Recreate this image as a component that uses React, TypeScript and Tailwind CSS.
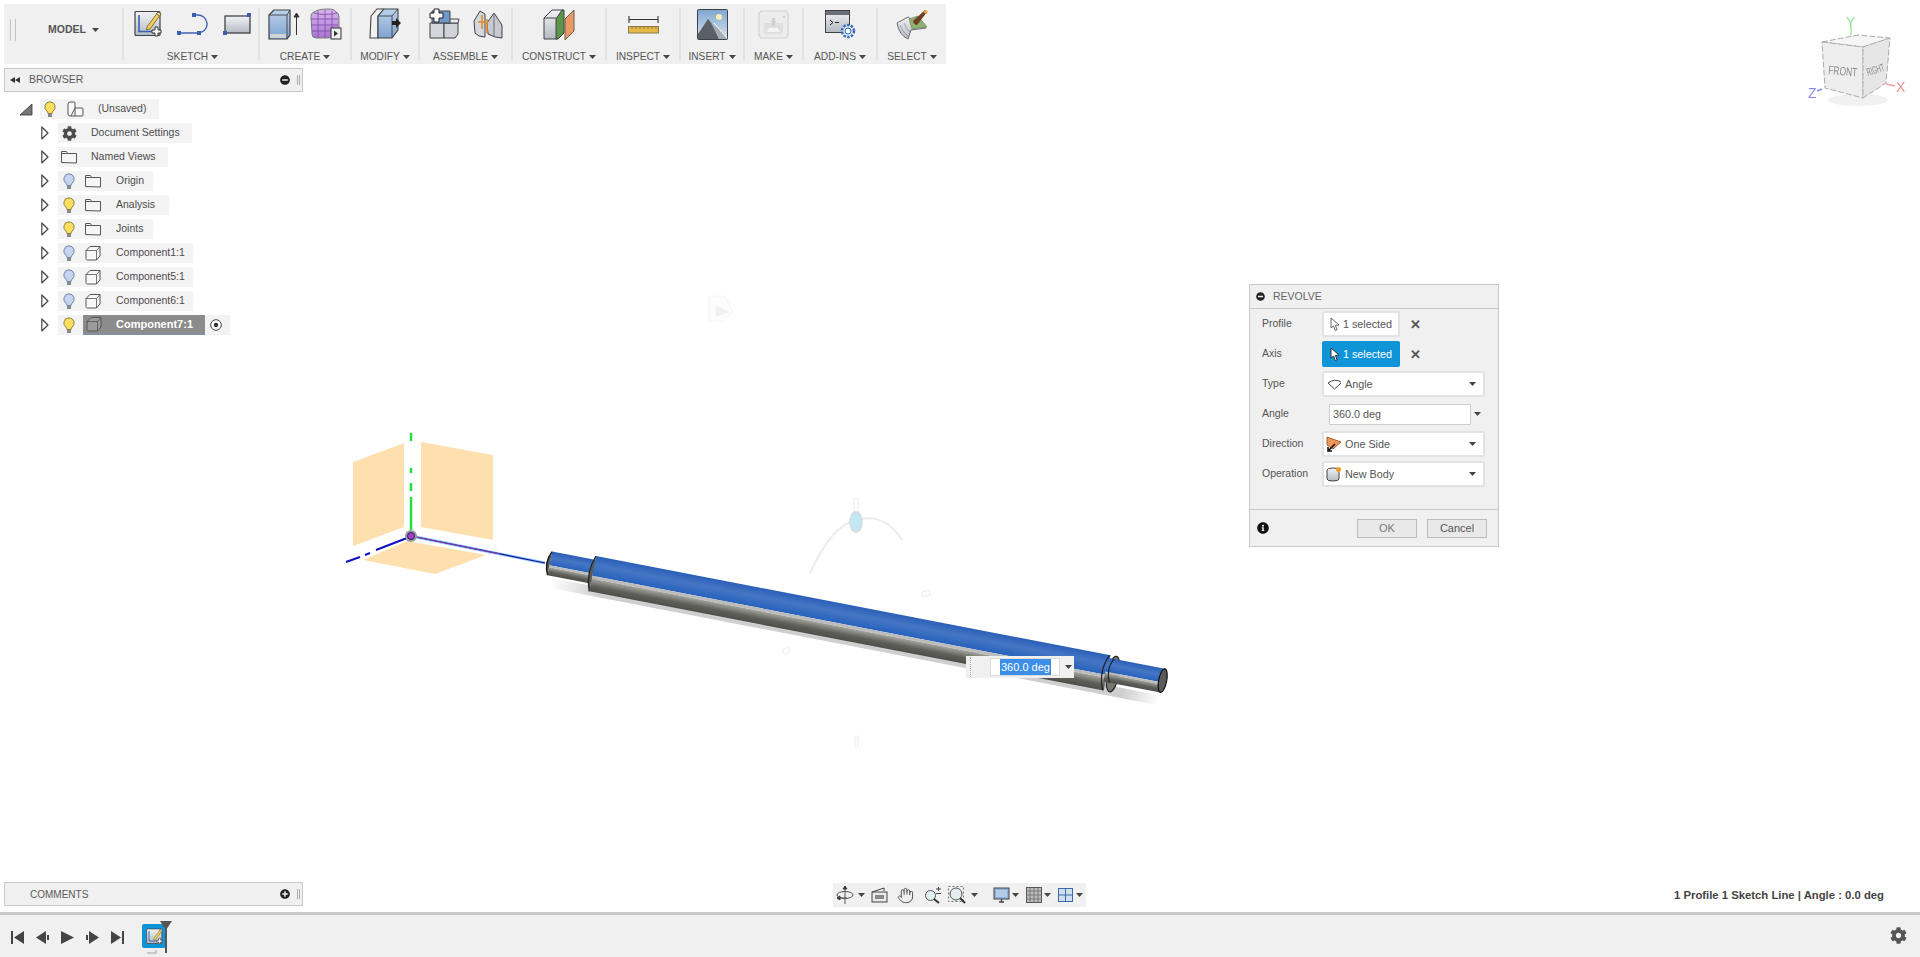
import React from 'react';
import { FaCog, FaInfoCircle, FaMinusCircle, FaPlusCircle } from 'react-icons/fa';
import { Hand } from 'lucide-react';

const Caret = ({ className = '' }: { className?: string }) => (
  <svg width="7" height="4" viewBox="0 0 7 4" className={`shrink-0 ${className}`}>
    <path d="M0 0h7L3.5 4z" fill="#444" />
  </svg>
);

const Gradients = () => (
  <svg className="absolute w-0 h-0">
    <defs>
      <linearGradient id="greyFace" x1="0" y1="0" x2="0" y2="1">
        <stop offset="0" stopColor="#f2f3f5" />
        <stop offset="1" stopColor="#b4b9c2" />
      </linearGradient>
      <linearGradient id="blueFace" x1="0" y1="0" x2="0" y2="1">
        <stop offset="0" stopColor="#bcd2ea" />
        <stop offset="1" stopColor="#7ea3cf" />
      </linearGradient>
      <linearGradient id="purpleFace" x1="0" y1="0" x2="0" y2="1">
        <stop offset="0" stopColor="#d9b5ec" />
        <stop offset="1" stopColor="#a873d2" />
      </linearGradient>
      <linearGradient id="shaftBlue" x1="0" y1="0" x2="0" y2="1">
        <stop offset="0" stopColor="#2a5fb8" />
        <stop offset="0.45" stopColor="#4576c4" />
        <stop offset="1" stopColor="#2762bd" />
      </linearGradient>
      <linearGradient id="shaftGrey" x1="0" y1="0" x2="0" y2="1">
        <stop offset="0" stopColor="#a5a59f" />
        <stop offset="0.55" stopColor="#5f5f5a" />
        <stop offset="1" stopColor="#4e4e4a" />
      </linearGradient>
      <linearGradient id="shadowFade" x1="0" y1="0" x2="1" y2="0">
        <stop offset="0" stopColor="#ffffff" />
        <stop offset="0.08" stopColor="#cfcfcf" />
        <stop offset="0.94" stopColor="#cfcfcf" />
        <stop offset="1" stopColor="#ffffff" />
      </linearGradient>
      <linearGradient id="skyFace" x1="0" y1="0" x2="0" y2="1">
        <stop offset="0" stopColor="#7fa6cf" />
        <stop offset="1" stopColor="#d9e6f0" />
      </linearGradient>
      <filter id="softBlur">
        <feGaussianBlur stdDeviation="0.5" />
      </filter>
    </defs>
  </svg>
);

const SketchIcon = ({ size = 28 }: { size?: number }) => (
  <svg width={size} height={size} viewBox="0 0 28 28">
    <rect x="1" y="1.5" width="25" height="24" rx="1" fill="url(#greyFace)" stroke="#3f4347" strokeWidth="1.2" />
    <path d="M5 5v16.5h17" fill="none" stroke="#3d62b4" strokeWidth="1.6" />
    <path d="M13 17 24 2l3 2-11 15-3.500 1z" fill="#f3cf57" stroke="#6f5a1a" strokeWidth="0.8" />
    <path d="M24 2l3 2-1.500 2-3-2z" fill="#e9e4d0" stroke="#6f5a1a" strokeWidth="0.8" />
    <path d="M19 19h3v-3h3v3h3v3h-3v3h-3v-3h-3z" fill="#fff" stroke="#333" strokeWidth="1" transform="translate(-1 1)" />
  </svg>
);

const ArcIcon = () => (
  <svg width="32" height="24" viewBox="0 0 32 24">
    <path d="M3 21h20M18 3h3a9 9 0 0 1 2 18" fill="none" stroke="#3d62b4" strokeWidth="1.4" />
    <rect x="1" y="19" width="4" height="4" fill="#3d5fb0" />
    <rect x="21" y="19" width="4" height="4" fill="#3d5fb0" />
    <rect x="16" y="1" width="4" height="4" fill="#3d5fb0" />
  </svg>
);

const RectIcon = () => (
  <svg width="30" height="24" viewBox="0 0 30 24">
    <rect x="3" y="4" width="25" height="17" fill="url(#greyFace)" stroke="#33363a" strokeWidth="1.2" />
    <rect x="25" y="1" width="4" height="4" fill="#3d5fb0" />
    <rect x="1" y="19" width="4" height="4" fill="#3d5fb0" />
  </svg>
);

const ExtrudeIcon = () => (
  <svg width="32" height="32" viewBox="0 0 32 32">
    <path d="M1 7 6 2h16v25l-3 4H1z" fill="url(#blueFace)" stroke="#3e4246" strokeWidth="1.2" strokeLinejoin="round" />
    <path d="M1 7h18v24M19 7l3-5" fill="none" stroke="#3e4246" strokeWidth="0.9" />
    <path d="M2 26h16v4H2z" fill="#cfd3d8" />
    <path d="M28.500 27V6M26 9l2.500-4L31 9z" fill="#333" stroke="#333" strokeWidth="1" />
  </svg>
);

const FormIcon = () => (
  <svg width="32" height="32" viewBox="0 0 32 32">
    <path d="M1 8q0-3 3-4 4-3 14-3 7 0 8 3 3 1 3 5v13q0 4-3 5-3 3-9 3H6q-4 0-4-4z" fill="url(#purpleFace)" stroke="#7a7a7a" strokeWidth="1" />
    <path d="M1 11h27M1 17h27M2 23h24M8 3v26M15 2v27M22 3v26M4 5q10 3 23 0" fill="none" stroke="#7c4aa6" strokeWidth="0.8" />
    <rect x="21" y="20" width="10" height="11" fill="#eee" stroke="#333" />
    <path d="M24 22.500v6l4-3z" fill="#333" />
  </svg>
);

const ModifyIcon = () => (
  <svg width="32" height="32" viewBox="0 0 32 32">
    <path d="M1 30 2 8l6-7h7L9 8v22z" fill="#f1f1f1" stroke="#3e4246" strokeWidth="1.1" strokeLinejoin="round" />
    <path d="M9 30V8l6-7h14v21l-6 8z" fill="url(#blueFace)" stroke="#3e4246" strokeWidth="1.1" strokeLinejoin="round" />
    <path d="M23 30V8l6-7" fill="none" stroke="#3e4246" strokeWidth="0.9" />
    <path d="M9 8h14" stroke="#3e4246" strokeWidth="0.9" />
    <path d="M23 13h4v-3l5 5-5 5v-3h-4z" fill="#222" />
  </svg>
);

const AssembleIcon = () => (
  <svg width="32" height="32" viewBox="0 0 32 32">
    <path d="M1 15h14v15H1z" fill="#d3d6da" stroke="#3e4246" />
    <path d="M15 30V15h14v11l-3 4z" fill="#cfd3d8" stroke="#3e4246" />
    <path d="M15 15l4-4h11l-1 4z" fill="#e9ebee" stroke="#3e4246" />
    <path d="M3 3h18v12H3z" fill="#6f97cc" stroke="#3e4246" />
    <path d="M4 4h4V0h5v4h4v5h-4v4H8V9H4z" fill="#fff" stroke="#222" transform="translate(-3 1)" />
  </svg>
);

const JointIcon = () => (
  <svg width="30" height="32" viewBox="0 0 30 32">
    <path d="M1 13 7 3l5 3v23l-6-1-4-3z" fill="#d4d7dc" stroke="#3e4246" />
    <path d="M14 15 21 5l8 12v13l-7-1-7-3z" fill="#c6cad0" stroke="#3e4246" />
    <path d="M9 7v14M5 14h8" stroke="#e08a2c" strokeWidth="1.6" />
    <path d="M14 11v14" stroke="#e08a2c" strokeWidth="1.6" />
    <path d="M21 5v24" stroke="#6d7176" strokeWidth="1" />
  </svg>
);

const ConstructIcon = () => (
  <svg width="32" height="32" viewBox="0 0 32 32">
    <path d="M1 10 9 2h11v24l-6 5H1z" fill="url(#greyFace)" stroke="#3e4246" strokeLinejoin="round" />
    <path d="M13 11 19 2h2v23l-6 6h-2z" fill="#5d9648" stroke="#3e4246" strokeLinejoin="round" />
    <path d="M1 10h12" stroke="#3e4246" />
    <path d="M22 11 31 2v21l-9 9z" fill="#ec9a63" stroke="#6a5a50" strokeLinejoin="round" />
  </svg>
);

const RulerIcon = () => (
  <svg width="31" height="20" viewBox="0 0 31 20">
    <path d="M1 2v7M30 2v7M1 5.500h29" stroke="#333" strokeWidth="1.1" fill="none" />
    <rect x="0.500" y="12.500" width="30" height="6.500" fill="#e6b94c" stroke="#8b7a45" />
    <path d="M4 13v2M8 13v2M12 13v2M16 13v2M20 13v2M24 13v2M28 13v2" stroke="#7e6520" strokeWidth="0.8" />
  </svg>
);

const InsertIcon = () => (
  <svg width="31" height="31" viewBox="0 0 31 31">
    <rect x="0.500" y="0.500" width="30" height="30" rx="1" fill="url(#skyFace)" stroke="#3e4246" />
    <circle cx="22" cy="8" r="3" fill="#f4eeb0" />
    <path d="M1 25 11 10l6 7 5 13H1z" fill="#5b6068" />
    <path d="M14 14 22 19l8 10v1h-8z" fill="#a3adb7" />
    <path d="M17 14l13 15" stroke="#fff" strokeWidth="1" />
  </svg>
);

const MakeIcon = () => (
  <svg width="31" height="29" viewBox="0 0 31 29">
    <path d="M3 1h25l2 3v21l-2 3H3l-2-3V4z" fill="#ececec" stroke="#d2d2d2" strokeWidth="1.2" />
    <path d="M6 13h7v-2h5v2h7v11H6z" fill="#dfdfdf" />
    <path d="M11 18h9l2 4H9z" fill="#f4f4f4" />
    <rect x="14" y="8" width="3" height="8" fill="#cfcfcf" />
    <rect x="25" y="6" width="2" height="2" fill="#cfcfcf" />
  </svg>
);

const AddInsIcon = () => (
  <svg width="31" height="29" viewBox="0 0 31 29">
    <rect x="0.500" y="0.500" width="24" height="22" fill="url(#greyFace)" stroke="#3e4246" />
    <rect x="1" y="1" width="23" height="4" fill="#6b7078" />
    <path d="M5 10l3 2.500L5 15M10 12.500h4" fill="none" stroke="#222" />
    <circle cx="23" cy="21" r="6" fill="#dbe9f7" stroke="#3468b8" strokeWidth="2.4" strokeDasharray="2.400 1.400" />
    <circle cx="23" cy="21" r="3" fill="#fff" stroke="#3468b8" />
  </svg>
);

const SelectIcon = () => (
  <svg width="33" height="31" viewBox="0 0 33 31">
    <path d="M1 14 12 8l18 11-15 2-3 9q-9-4-11-16z" fill="url(#greyFace)" stroke="#6a6e72" strokeLinejoin="round" />
    <path d="M4 16q2 7 8 11M8 14q2 6 6 9" fill="none" stroke="#8c9096" strokeWidth="0.8" />
    <path d="M13 10l9-3 9 11-15 2z" fill="#8eb072" stroke="#5f7f4f" strokeWidth="0.6" />
    <path d="M17 12 29 1l2 2-10 13q-3 0-4-4z" fill="#6e3f22" />
    <path d="M27 3l3-2 2 2-2 2z" fill="#e8a040" />
  </svg>
);

const ToolGroup = ({
  className,
  rowClass = 'gap-[14px]',
  label,
  children,
}: {
  className: string;
  rowClass?: string;
  label: string;
  children: React.ReactNode;
}) => (
  <div className={`h-[52px] flex flex-col items-center border-l-2 border-[#e2e2e2] shrink-0 ${className}`}>
    <div className={`h-8 shrink-0 flex items-center justify-center ${rowClass}`}>{children}</div>
    <div className="mt-[11px] h-3 shrink-0 flex items-center gap-[3px] text-[10.2px] leading-3 text-[#555]">
      {label}
      <Caret />
    </div>
  </div>
);

const Toolbar = () => (
  <div className="w-[942px] h-[60px] ml-1 mt-1 pt-1 flex bg-[#f0f0f0]">
    <div className="w-[118px] h-[52px] flex items-center shrink-0">
      <div className="ml-[6px] w-[6px] h-[22px] border-x border-[#c4c4c4] mb-[8px]" />
      <div className="ml-[32px] mb-[8px] flex items-center gap-[6px] text-[10.5px] font-bold text-[#555]">
        MODEL
        <Caret />
      </div>
    </div>
    <ToolGroup className="w-[136px] pl-[3px]" label="SKETCH">
      <SketchIcon />
      <ArcIcon />
      <RectIcon />
    </ToolGroup>
    <ToolGroup className="w-[92px]" rowClass="gap-[10px]" label="CREATE">
      <ExtrudeIcon />
      <FormIcon />
    </ToolGroup>
    <ToolGroup className="w-[68px]" label="MODIFY">
      <ModifyIcon />
    </ToolGroup>
    <ToolGroup className="w-[93px]" rowClass="gap-[12px]" label="ASSEMBLE">
      <AssembleIcon />
      <JointIcon />
    </ToolGroup>
    <ToolGroup className="w-[94px]" label="CONSTRUCT">
      <ConstructIcon />
    </ToolGroup>
    <ToolGroup className="w-[74px]" label="INSPECT">
      <RulerIcon />
    </ToolGroup>
    <ToolGroup className="w-[64px]" label="INSERT">
      <InsertIcon />
    </ToolGroup>
    <ToolGroup className="w-[59px]" label="MAKE">
      <MakeIcon />
    </ToolGroup>
    <ToolGroup className="w-[74px]" label="ADD-INS">
      <AddInsIcon />
    </ToolGroup>
    <ToolGroup className="w-[70px]" label="SELECT">
      <SelectIcon />
    </ToolGroup>
  </div>
);

const Bulb = ({ on }: { on: boolean }) => (
  <svg width="12" height="17" viewBox="0 0 12 17" className="shrink-0">
    <path
      d="M6 .8a5.200 5.200 0 0 0-3 9.400c.7.6.9 1.300.9 2.300h4.200c0-1 .2-1.700.9-2.300A5.200 5.200 0 0 0 6 .8z"
      fill={on ? '#fbdf5e' : '#c5d5f2'}
      stroke={on ? '#8d8246' : '#6f83ad'}
    />
    <rect x="4" y="13" width="4" height="3" fill="#8a8a8a" />
  </svg>
);

const FolderIcon = () => (
  <svg width="16" height="14" viewBox="0 0 16 14" className="shrink-0">
    <path d="M.500 12.500v-11h5l1 2h9v9.500z" fill="#f6f6f6" stroke="#555" />
    <path d="M.500 3.500h6" stroke="#555" />
  </svg>
);

const BoxIcon = ({ white = false }: { white?: boolean }) => (
  <svg width="16" height="16" viewBox="0 0 16 16" className="shrink-0">
    <path d="M1 5.500 5 1.500h10v9.500l-3.500 4H2.500Q1 15 1 13.500z" fill={white ? '#9a9a9a' : '#f8f8f8'} stroke="#555" strokeLinejoin="round" />
    <path d="M1 5.500h10.500V15M11.500 5.500 15 1.500" fill="none" stroke="#555" strokeWidth="0.8" />
  </svg>
);

const RootIcon = () => (
  <svg width="17" height="16" viewBox="0 0 17 16" className="shrink-0">
    <path d="M1 3q0-2 2-2h4q1 0 1 1v5h7q1 0 1 1v6q0 1-1 1H3q-2 0-2-2zM8 7v8M8 7 4 15" fill="#f8f8f8" stroke="#555" />
  </svg>
);

const ExpandArrow = () => (
  <svg width="8" height="14" viewBox="0 0 8 14" className="shrink-0">
    <path d="M.800 1v12L7 7z" fill="#fff" stroke="#444" strokeWidth="1.200" strokeLinejoin="round" />
  </svg>
);

const TreeRow = ({
  bulb,
  icon,
  label,
  width,
}: {
  bulb?: 'on' | 'off';
  icon: React.ReactNode;
  label: string;
  width: string;
}) => (
  <div className="h-6 flex items-center pl-[37px]">
    <ExpandArrow />
    <div className={`ml-[9px] h-5 flex items-center bg-[#f3f3f3] ${width}`}>
      {bulb ? (
        <>
          <span className="ml-[5px]">
            <Bulb on={bulb === 'on'} />
          </span>
          <span className="ml-[10px] w-[16px] flex justify-center">{icon}</span>
          <span className="ml-[15px] text-[10.5px] text-[#4c4c4c] whitespace-nowrap">{label}</span>
        </>
      ) : (
        <>
          <span className="ml-[3px] w-[16px] flex justify-center">{icon}</span>
          <span className="ml-[14px] text-[10.5px] text-[#4c4c4c] whitespace-nowrap">{label}</span>
        </>
      )}
    </div>
  </div>
);

const Browser = () => (
  <div className="ml-1 mt-1 w-[299px]">
    <div className="h-6 flex items-center bg-[#f0f0f0] border border-[#c8c8c8] text-[10.5px] text-[#5a5a5a]">
      <svg width="10" height="6" viewBox="0 0 10 6" className="ml-[5px]">
        <path d="M5 0v6L0 3zM10 0v6L5 3z" fill="#333" />
      </svg>
      <span className="ml-[9px]">BROWSER</span>
      <FaMinusCircle className="ml-auto mr-[7px] text-[#222] text-[10px]" />
      <div className="mr-[2px] w-[3px] h-[10px] border-x border-[#aaa]" />
    </div>
    <div className="pt-[5px]">
      <div className="h-6 flex items-center pl-[16px]">
        <svg width="13" height="13" viewBox="0 0 13 13" className="shrink-0">
          <path d="M0 12 12 1v11z" fill="#777" stroke="#333" strokeWidth="0.8" />
        </svg>
        <div className="ml-[7px] w-[119px] h-5 flex items-center bg-[#f3f3f3]">
          <span className="ml-1">
            <Bulb on />
          </span>
          <span className="ml-[11px]">
            <RootIcon />
          </span>
          <span className="ml-[14px] text-[10.5px] text-[#4c4c4c]">(Unsaved)</span>
        </div>
      </div>
      <TreeRow width="w-[134px]" label="Document Settings" icon={<FaCog className="text-[#4d4d4d] text-[15px]" />} />
      <TreeRow width="w-[110px]" label="Named Views" icon={<FolderIcon />} />
      <TreeRow width="w-[95px]" bulb="off" label="Origin" icon={<FolderIcon />} />
      <TreeRow width="w-[111px]" bulb="on" label="Analysis" icon={<FolderIcon />} />
      <TreeRow width="w-[95px]" bulb="on" label="Joints" icon={<FolderIcon />} />
      <TreeRow width="w-[135px]" bulb="off" label="Component1:1" icon={<BoxIcon />} />
      <TreeRow width="w-[135px]" bulb="off" label="Component5:1" icon={<BoxIcon />} />
      <TreeRow width="w-[135px]" bulb="off" label="Component6:1" icon={<BoxIcon />} />
      <div className="h-6 flex items-center pl-[37px]">
        <ExpandArrow />
        <div className="ml-[9px] w-[172px] h-5 flex items-center bg-[#f3f3f3]">
          <span className="ml-[5px]">
            <Bulb on />
          </span>
          <div className="ml-[8px] w-[122px] h-5 flex items-center bg-[#8c8c8c] border-b-2 border-dotted border-[#7f93b5]">
            <span className="ml-[3px]">
              <BoxIcon white />
            </span>
            <span className="ml-[14px] text-[11px] font-bold text-white whitespace-nowrap">Component7:1</span>
          </div>
          <svg width="12" height="12" viewBox="0 0 12 12" className="ml-[5px] shrink-0">
            <circle cx="6" cy="6" r="5.300" fill="#fff" stroke="#444" />
            <circle cx="6" cy="6" r="2.200" fill="#333" />
          </svg>
        </div>
      </div>
    </div>
  </div>
);

const Comments = () => (
  <div className="ml-1 mb-[6px] w-[299px] h-6 flex items-center bg-[#f0f0f0] border border-[#c8c8c8] text-[10px] text-[#5a5a5a]">
    <span className="ml-[25px]">COMMENTS</span>
    <FaPlusCircle className="ml-auto mr-[7px] text-[#222] text-[10px]" />
    <div className="mr-[2px] w-[3px] h-[10px] border-x border-[#aaa]" />
  </div>
);

const DialogRow = ({ label, children }: { label: string; children: React.ReactNode }) => (
  <div className="h-[30px] flex items-center">
    <span className="w-[72px] pl-3 text-[10.5px] text-[#555] shrink-0">{label}</span>
    {children}
  </div>
);

const CursorArrow = ({ fill, stroke }: { fill: string; stroke: string }) => (
  <svg width="10" height="15" viewBox="0 0 10 15" className="shrink-0">
    <path d="M1 1v10l2.500-2 1.800 4.500 1.800-.8L5.300 8.400 9 8z" fill={fill} stroke={stroke} strokeLinejoin="round" />
  </svg>
);

const Select = ({ icon, label }: { icon: React.ReactNode; label: string }) => (
  <div className="w-[163px] h-[26px] flex items-center bg-white border-2 border-[#e2e2e2] rounded-[2px]">
    <span className="w-[20px] flex justify-center">{icon}</span>
    <span className="ml-[1px] text-[10.8px] text-[#555]">{label}</span>
    <Caret className="ml-auto mr-[7px]" />
  </div>
);

const RevolveDialog = () => (
  <div className="absolute left-[1249px] top-[284px] w-[250px] h-[263px] flex flex-col bg-[#f0f0f0] border border-[#c9c9c9]">
    <div className="h-6 shrink-0 flex items-center border-b border-[#c9c9c9] text-[10.5px] text-[#666]">
      <FaMinusCircle className="ml-[6px] text-[#222] text-[9px]" />
      <span className="ml-[8px]">REVOLVE</span>
    </div>
    <div className="h-[200px] shrink-0">
      <DialogRow label="Profile">
        <div className="w-[78px] h-[26px] flex items-center justify-center gap-[3px] bg-white border-2 border-[#e2e2e2] rounded-[2px] text-[10.8px] text-[#555]">
          <CursorArrow fill="#fff" stroke="#666" />1 selected
        </div>
        <span className="ml-[10px] text-[13px] font-bold text-[#555] leading-none">✕</span>
      </DialogRow>
      <DialogRow label="Axis">
        <div className="w-[78px] h-[26px] flex items-center justify-center gap-[3px] bg-[#0f94d8] rounded-[2px] text-[10.8px] text-white">
          <CursorArrow fill="#fff" stroke="#333" />1 selected
        </div>
        <span className="ml-[10px] text-[13px] font-bold text-[#555] leading-none">✕</span>
      </DialogRow>
      <DialogRow label="Type">
        <Select
          label="Angle"
          icon={
            <svg width="15" height="11" viewBox="0 0 15 11">
              <path d="M1 4 7.500 10 14 4M1 4q6.500-5 13-1" fill="#fff" stroke="#444" />
            </svg>
          }
        />
      </DialogRow>
      <DialogRow label="Angle">
        <div className="ml-[7px] w-[142px] h-[21px] flex items-center pl-[3px] bg-white border border-[#cfcfcf] text-[10.8px] text-[#555]">
          360.0 deg
        </div>
        <Caret className="ml-[3px]" />
      </DialogRow>
      <DialogRow label="Direction">
        <Select
          label="One Side"
          icon={
            <svg width="16" height="16" viewBox="0 0 16 16">
              <path d="M1 1 15 6 7 13 1 9z" fill="#f0965a" stroke="#8a4a20" strokeWidth="0.8" />
              <path d="M9 8 2 15M2 11v4h4" fill="none" stroke="#111" strokeWidth="1.600" />
            </svg>
          }
        />
      </DialogRow>
      <DialogRow label="Operation">
        <Select
          label="New Body"
          icon={
            <svg width="16" height="16" viewBox="0 0 16 16">
              <path d="M1 4q0-2 6-2t6 2v9q0 2-6 2t-6-2z" fill="url(#greyFace)" stroke="#444" />
              <circle cx="12.500" cy="3.500" r="2.500" fill="#f0a020" />
            </svg>
          }
        />
      </DialogRow>
    </div>
    <div className="flex-1 flex items-center border-t border-[#c9c9c9]">
      <FaInfoCircle className="ml-[7px] text-[#111] text-[12px]" />
      <div className="ml-auto mr-[11px] flex gap-[10px]">
        <div className="w-[60px] h-[19px] flex items-center justify-center bg-[#e9e9e9] border border-[#bcbcbc] text-[11px] text-[#777]">
          OK
        </div>
        <div className="w-[60px] h-[19px] flex items-center justify-center bg-[#e9e9e9] border border-[#bcbcbc] text-[11px] text-[#555]">
          Cancel
        </div>
      </div>
    </div>
  </div>
);

const FloatingInput = () => (
  <div className="absolute left-[966px] top-[656px] w-[108px] h-[22px] flex items-center bg-[#f0f0f0]">
    <div className="ml-[4px] w-[1px] h-[20px] border-l border-dotted border-[#aaa]" />
    <div className="ml-[19px] w-[70px] h-[18px] flex items-center pl-[9px] bg-white border border-[#dcdcdc]">
      <span className="px-[1px] bg-[#3d8ee8] text-[11px] leading-[16px] text-white whitespace-nowrap">360.0 deg</span>
    </div>
    <Caret className="ml-[5px]" />
  </div>
);

const Scene = () => (
  <svg className="absolute left-0 top-0" width="1920" height="912" viewBox="0 0 1920 912">
    {/* faint manipulator marks */}
    <path d="M709 296h16l8 16-8 9h-16z" fill="#fcfcfc" stroke="#f6f6f6" />
    <path d="M716 306l14 6-14 5z" fill="#f0f0f0" />
    <path d="M854 499h4v13h-4zM922 592l8-2v5l-8 2zM782 650l6-3 2 5-6 2zM855 736h3v11h-3z" fill="none" stroke="#ececec" />
    <path d="M810 573Q832 525 856 520Q885 512 902 540" fill="none" stroke="#ececec" strokeWidth="2" />
    <ellipse cx="856" cy="522" rx="6" ry="10" fill="#c4e6f6" stroke="#d3dbe2" strokeWidth="1.500" />

    {/* origin planes */}
    <path d="M353 462 404 443V527L353 546z" fill="#fde0ad" />
    <path d="M421 442 493 455V540L421 527z" fill="#fde0ad" />
    <path d="M363 560 407 541 486 555 435 574z" fill="#fde0ad" />
    <path d="M411 433V441M411 468V473M411 483V491M411 497V530" stroke="#1fe03f" strokeWidth="2.500" />
    <path d="M407 538 376 550M370 553 365 555M360 557 346 562" stroke="#1010c8" strokeWidth="2" />

    {/* shaft */}
    <g transform="translate(596 556) rotate(10.92)">
      <rect x="-40" y="30" width="620" height="10" fill="url(#shadowFade)" />
      <path d="M-44 4H5V18H-44z" fill="url(#shaftBlue)" />
      <rect x="-44" y="18" width="49" height="2" fill="#bdbdbd" />
      <rect x="-44" y="20" width="49" height="8" fill="url(#shaftGrey)" />
      <path d="M-44 4q-6 12 0 24" fill="#555" stroke="#111" strokeWidth="1.200" />
      <rect x="0" y="0" width="524" height="20" fill="url(#shaftBlue)" />
      <rect x="0" y="20" width="524" height="3" fill="#bcbcbc" />
      <rect x="0" y="23" width="524" height="13" fill="url(#shaftGrey)" />
      <path d="M0 0q-7 18 0 36" fill="#5a5a57" stroke="#222" strokeWidth="1.200" />
      {/* collar sits behind the thin end, only its edges show */}
      <ellipse cx="530" cy="18" rx="6" ry="18" fill="#77776f" stroke="#222" strokeWidth="1.200" />
      <rect x="522" y="3" width="58" height="14" fill="url(#shaftBlue)" />
      <rect x="522" y="17" width="58" height="2" fill="#bcbcbc" />
      <rect x="522" y="19" width="58" height="8" fill="url(#shaftGrey)" />
      <path d="M523 0q-8 18 0 36" fill="none" stroke="#222" strokeWidth="1.200" />
      <path d="M528 3q-6 12 0 24" fill="none" stroke="#222" strokeWidth="1.200" />
      <ellipse cx="580" cy="15" rx="4" ry="12" fill="#5b5b58" stroke="#111" strokeWidth="1.200" />
    </g>

    {/* axis line through the origin */}
    <path d="M411 536 545 563" stroke="#8ec8ff" strokeWidth="3" />
    <path d="M411 536 545 563" stroke="#12128f" strokeWidth="1.200" />
    <path d="M411 536 500 554" stroke="#8b3aa8" strokeWidth="1" />
    <circle cx="411" cy="536" r="6" fill="#9b9b9b" />
    <circle cx="411" cy="536" r="3.500" fill="#a83fc0" stroke="#21217a" />

    {/* view cube */}
    <g filter="url(#softBlur)">
      <ellipse cx="1858" cy="100" rx="30" ry="6" fill="#f1f1f1" />
      <path d="M1822 42 1858 35 1890 38 1863 47z" fill="#f6f6f6" stroke="#aaa" strokeDasharray="6 2" />
      <path d="M1822 42 1863 47V98L1825 88z" fill="#eeeeee" stroke="#aaa" strokeDasharray="6 2" />
      <path d="M1863 47 1890 38 1886 83 1863 98z" fill="#e6e6e6" stroke="#aaa" strokeDasharray="6 2" />
      <text x="1828" y="74" fontFamily="Liberation Sans, sans-serif" fontSize="12" fill="#8a8a8a" transform="rotate(5 1828 74)" textLength="29" lengthAdjust="spacingAndGlyphs">FRONT</text>
      <text x="1868" y="76" fontFamily="Liberation Sans, sans-serif" fontSize="11" fill="#8a8a8a" transform="rotate(-17 1868 76)" textLength="18" lengthAdjust="spacingAndGlyphs">RIGHT</text>
      <path d="M1851 26V35" stroke="#a3eaa3" strokeWidth="1.500" />
      <path d="M1822 89 1817 91" stroke="#8a8aee" strokeWidth="1.500" />
      <path d="M1886 84 1895 86" stroke="#f0a0a0" strokeWidth="1.500" />
      <text x="1846" y="27" fontFamily="Liberation Sans, sans-serif" fontSize="14" fill="#8fe08f">Y</text>
      <text x="1808" y="98" fontFamily="Liberation Sans, sans-serif" fontSize="14" fill="#8a8aee">Z</text>
      <text x="1896" y="92" fontFamily="Liberation Sans, sans-serif" fontSize="14" fill="#f09090">X</text>
    </g>
  </svg>
);

const NavBar = () => (
  <div className="absolute left-[833px] top-[883px] w-[253px] h-6 flex items-center bg-[#f0f0f0]">
    <svg width="18" height="20" viewBox="0 0 18 20" className="ml-[3px]">
      <path d="M9 1v18M9 1 7 4h4zM1 13h10M1 13l3-2v4z" fill="#333" stroke="#333" strokeWidth="0.8" />
      <ellipse cx="9" cy="10" rx="8" ry="3.500" fill="none" stroke="#555" />
    </svg>
    <Caret className="ml-[4px]" />
    <svg width="17" height="16" viewBox="0 0 17 16" className="ml-[6px]">
      <rect x="1" y="5" width="15" height="10" fill="#e8e8e8" stroke="#444" />
      <rect x="4" y="8" width="9" height="4" fill="#888" />
      <path d="M1 5 13 1v3" fill="none" stroke="#444" />
    </svg>
    <Hand size={17} strokeWidth={1.300} className="ml-[9px] text-[#444]" />
    <svg width="18" height="18" viewBox="0 0 18 18" className="ml-[10px]">
      <circle cx="6.500" cy="9.500" r="5" fill="#e4edf2" stroke="#555" />
      <path d="M10 13l5 4" stroke="#333" strokeWidth="2" />
      <path d="M12 3h5M14.500 1v4M12 7.500h5" stroke="#444" />
    </svg>
    <svg width="18" height="18" viewBox="0 0 18 18" className="ml-[6px]">
      <rect x="0.500" y="0.500" width="15" height="15" fill="none" stroke="#777" strokeDasharray="2 2" />
      <circle cx="8" cy="8" r="6" fill="#e4edf2" stroke="#555" />
      <path d="M12 12l5 5" stroke="#333" strokeWidth="2" />
    </svg>
    <Caret className="ml-[5px]" />
    <svg width="17" height="17" viewBox="0 0 17 17" className="ml-[15px]">
      <rect x="1" y="1" width="15" height="11" fill="#8fb3d9" stroke="#444" />
      <rect x="3" y="3" width="11" height="7" fill="#b4cde6" />
      <path d="M6 15h5M8.500 12v3" stroke="#444" strokeWidth="1.400" />
    </svg>
    <Caret className="ml-[2px]" />
    <svg width="16" height="16" viewBox="0 0 16 16" className="ml-[7px]">
      <rect x="0.500" y="0.500" width="15" height="15" fill="#bbb" stroke="#555" />
      <path d="M4 0v16M8 0v16M12 0v16M0 4h16M0 8h16M0 12h16" stroke="#666" strokeWidth="0.700" />
    </svg>
    <Caret className="ml-[2px]" />
    <svg width="15" height="14" viewBox="0 0 15 14" className="ml-[7px]">
      <rect x="0.500" y="0.500" width="14" height="13" fill="#cfe0f3" stroke="#3f68a8" />
      <path d="M7.500 0v14M0 7h15" stroke="#3f68a8" />
    </svg>
    <Caret className="ml-[3px]" />
  </div>
);

const StepIcon = ({ d }: { d: string }) => (
  <svg width="13" height="13" viewBox="0 0 13 13" className="shrink-0">
    <path d={d} fill="#444" />
  </svg>
);

const Timeline = () => (
  <div className="h-[45px] shrink-0 flex items-center bg-[#f0f0f0] border-t-[3px] border-[#c8c8c8]">
    <div className="ml-[11px] mt-[3px] flex gap-[12px]">
      <StepIcon d="M0 0h2v13H0zM13 0v13L3 6.500z" />
      <StepIcon d="M10 0v13L0 6.500zM11 4h2v5h-2z" />
      <StepIcon d="M0 0l13 6.500L0 13z" />
      <StepIcon d="M3 0v13l10-6.500zM0 4h2v5H0z" />
      <StepIcon d="M11 0h2v13h-2zM0 0v13l10-6.500z" />
    </div>
    <div className="ml-[18px] relative w-6 h-6 flex items-center justify-center bg-[#0f94d8] rounded-[2px]">
      <SketchIcon size={17} />
      <div className="absolute left-[24px] top-[-2px] w-[2px] h-[31px] -ml-[1px] bg-[#555]" />
      <svg width="12" height="9" viewBox="0 0 12 9" className="absolute left-[18px] top-[-3px]">
        <path d="M0 0h12L6 9z" fill="#555" />
      </svg>
      <div className="absolute left-[5px] top-[26px] w-[10px] h-[4px] border-b-2 border-r-2 border-[#c8c8c8]" />
    </div>
    <FaCog className="ml-auto mr-[13px] mt-[-1px] text-[#555] text-[17px]" />
  </div>
);

export default function App() {
  return (
    <div className="w-[1920px] h-[957px] flex flex-col overflow-hidden bg-white font-['Liberation_Sans',Arial,sans-serif]">
      <Gradients />
      <div className="relative flex-1">
        <Scene />
        <div className="relative h-full flex flex-col">
          <Toolbar />
          <Browser />
          <div className="mt-auto">
            <Comments />
          </div>
        </div>
        <RevolveDialog />
        <FloatingInput />
        <NavBar />
        <div className="absolute right-[36px] top-[887px] text-[11.3px] font-bold text-[#444] whitespace-nowrap">
          1 Profile 1 Sketch Line | Angle : 0.0 deg
        </div>
      </div>
      <Timeline />
    </div>
  );
}
